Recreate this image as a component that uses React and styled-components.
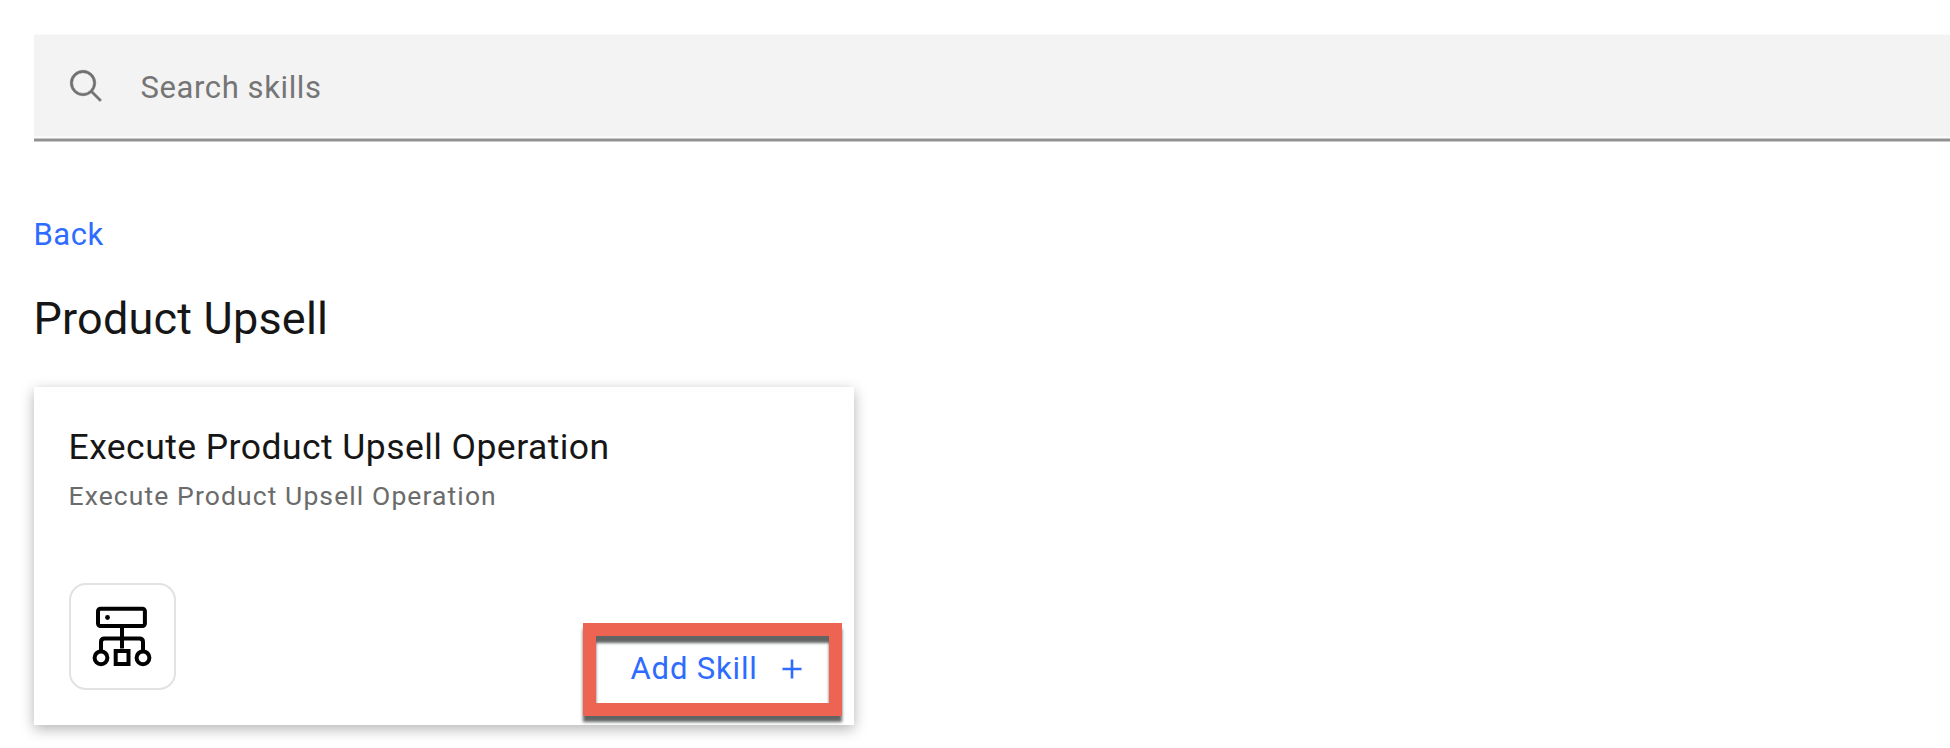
import React from "react";
import styled, { createGlobalStyle } from "styled-components";

const GlobalStyle = createGlobalStyle`
  * { box-sizing: border-box; }
  body { margin: 0; background: #fff; overflow: hidden; font-family: Roboto, "Liberation Sans", sans-serif; color: #161616; }
`;

const Page = styled.main`
  height: 748px;
  padding: 34px 0 0 33.5px;
`;

const SearchBar = styled.label`
  display: flex;
  align-items: center;
  gap: 35.5px;
  height: 107px;
  padding: 0 34px 0 34.5px;
  background: #f3f3f3;
  border-bottom: 2px solid #919191;
  box-shadow: 0 1px #c8c8c8, inset 0 -1px #c8c8c8, inset 0 -3px #fafafa, inset 0 1px #f9f9f9;
`;

const SearchInput = styled.input`
  flex: 1;
  padding: 2px 0 0;
  border: 0;
  outline: 0;
  background: transparent;
  font: 31px/40px Roboto, "Liberation Sans", sans-serif;
  letter-spacing: 0.6px;
  &::placeholder { color: #757575; opacity: 1; }
`;

const BackLink = styled.a`
  display: block;
  width: max-content;
  margin-top: 74px;
  color: #2e6bff;
  font-size: 31px;
  line-height: 40px;
  letter-spacing: 0.5px;
`;

const Heading = styled.h1`
  margin: 35px 0 0;
  font-size: 45px;
  font-weight: 400;
  line-height: 58px;
  letter-spacing: 0.2px;
`;

const Card = styled.article`
  display: flex;
  flex-direction: column;
  width: 820px;
  height: 338px;
  margin-top: 39px;
  padding: 38px 12px 9px 35px;
  background: #fff;
  box-shadow: 0 4px 13px rgba(0, 0, 0, 0.3);
`;

const CardTitle = styled.h2`
  margin: 0;
  font-size: 35.5px;
  font-weight: 400;
  line-height: 44px;
  letter-spacing: 0.45px;
`;

const CardDescription = styled.p`
  margin: 10px 0 0;
  color: #6b6b6b;
  font-size: 26.5px;
  line-height: 34px;
  letter-spacing: 1.1px;
`;

const CardFooter = styled.footer`
  display: flex;
  justify-content: space-between;
  align-items: flex-end;
  margin-top: auto;
`;

const SkillIcon = styled.div`
  display: grid;
  place-items: center;
  width: 107px;
  height: 107px;
  margin-bottom: 26px;
  border: 2px solid #e2e2e2;
  border-radius: 17px;
`;

const Highlight = styled.div`
  display: flex;
  width: 259px;
  height: 93px;
  border: 13px solid #ed6453;
  box-shadow: 0 6px 3px #626464, inset 0 7px 3px #626464;
`;

const AddButton = styled.button`
  display: flex;
  align-items: center;
  justify-content: space-between;
  flex: 1;
  padding: 0 27px 1px 35px;
  border: 0;
  background: transparent;
  color: #2e6bff;
  font: 31px/40px Roboto, "Liberation Sans", sans-serif;
  letter-spacing: 0.85px;
  white-space: nowrap;
`;

const SearchIcon = () => (
  <svg width="37" height="37" viewBox="0 0 32 32" fill="#707070" stroke="#707070" strokeWidth="0.5">
    <path d="M29 27.5859l-7.5521-7.5521a11.0177 11.0177 0 1 0-1.4141 1.4141L27.5859 29ZM4 13a9 9 0 1 1 9 9A9.01 9.01 0 0 1 4 13Z" />
  </svg>
);

const FlowIcon = () => (
  <svg width="64" height="64" viewBox="0 0 64 64" fill="none" stroke="#000" strokeWidth="4">
    <rect x="8" y="3.8" width="46.9" height="17.2" rx="2.5" />
    <circle cx="17.5" cy="12.5" r="2.4" fill="#000" stroke="none" />
    <path d="M32 20.5v23M11 46V37q0-3.5 3.5-3.5h35q3.5 0 3.5 3.5v9" />
    <circle cx="11" cy="52.8" r="6.4" />
    <circle cx="53" cy="52.8" r="6.4" />
    <rect x="25.7" y="46" width="12.8" height="13" />
  </svg>
);

const PlusIcon = () => (
  <svg width="20" height="20" viewBox="0 0 20 20" fill="none" stroke="currentColor" strokeWidth="2.6">
    <path d="M10 0.5v19M0.5 10h19" />
  </svg>
);

export default function App() {
  return (
    <>
      <GlobalStyle />
      <Page>
        <SearchBar>
          <SearchIcon />
          <SearchInput placeholder="Search skills" />
        </SearchBar>
        <BackLink>Back</BackLink>
        <Heading>Product Upsell</Heading>
        <Card>
          <CardTitle>Execute Product Upsell Operation</CardTitle>
          <CardDescription>Execute Product Upsell Operation</CardDescription>
          <CardFooter>
            <SkillIcon>
              <FlowIcon />
            </SkillIcon>
            <Highlight>
              <AddButton>
                Add Skill
                <PlusIcon />
              </AddButton>
            </Highlight>
          </CardFooter>
        </Card>
      </Page>
    </>
  );
}
